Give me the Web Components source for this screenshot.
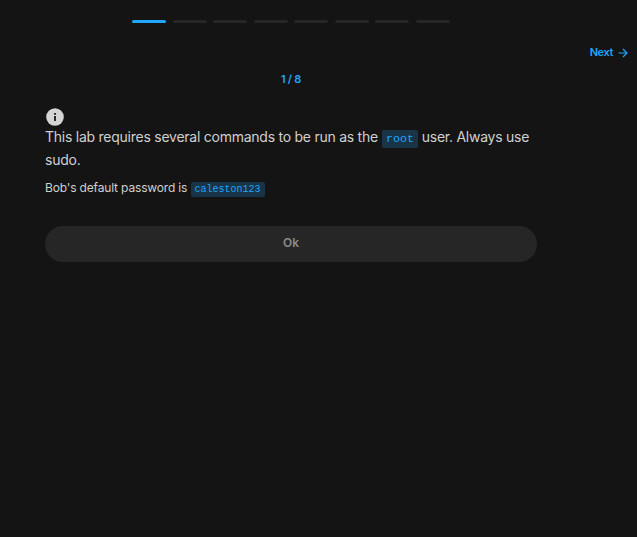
<!DOCTYPE html>
<html lang="en">
<head>
<meta charset="utf-8">
<title>Lab</title>
<style>
body{margin:0;background:#141414;color:#d0d0d0;font-family:Inter,"Liberation Sans",sans-serif}
</style>
</head>
<body>
<lab-quiz></lab-quiz>
<script>
const define=(name,html,setup)=>customElements.define(name,class extends HTMLElement{
  constructor(){super();this.attachShadow({mode:"open"}).innerHTML=html;}
  connectedCallback(){if(setup)setup(this,this.shadowRoot);}
});
define("step-progress",`<style>
:host{display:flex;justify-content:space-between;width:318px;height:3px}
i{width:34px;border-radius:2px;background:#262626}
i.on{background:#1ea7fd}
</style>`,(el,root)=>{
  for(let n=1;n<=+el.getAttribute("total");n++){
    const i=document.createElement("i");
    if(n<=+el.getAttribute("current"))i.className="on";
    root.append(i);
  }
});
define("next-link",`<style>
:host{display:flex;align-items:center;gap:5px;color:#1ea7fd;font-weight:600;font-size:11px;letter-spacing:-.4px;line-height:16px}
svg{display:block;margin-top:1px}
</style><slot></slot><svg width="10" height="10" viewBox="0 0 10 10" fill="none" stroke="currentColor" stroke-width="1.15"><path d="M.5 5H9M5 1 9 5 5 9"/></svg>`);
define("info-icon",`<style>:host{display:block;width:18px;height:18px}svg{display:block}</style>
<svg width="18" height="18" viewBox="0 0 18 18"><circle cx="9" cy="9" r="8.8" fill="#d4d4d4"/><path d="M8 5h2v1.7H8zM8 8h2v5H8z" fill="#302626"/></svg>`);
define("inline-code",`<style>
:host{display:inline-block;box-sizing:border-box;padding:0 4px;height:var(--h,18px);line-height:var(--h,18px);font-size:var(--fs,11.67px);letter-spacing:0;border-radius:2px;background:#183446;color:#1ea7fd;font-family:"Liberation Mono",monospace}
</style><slot></slot>`);
define("pill-button",`<style>
:host{display:block}
button{display:block;width:100%;height:36px;border:0;border-radius:18px;background:#262626;color:#8a8a8a;font:600 12px/34px Inter,sans-serif;padding:0 0 2px}
</style><button><slot></slot></button>`);
define("lab-quiz",`<style>
:host{display:flex;flex-direction:column;min-height:537px;box-sizing:border-box;padding-top:20px}
step-progress{margin-left:132px}
next-link{align-self:flex-end;margin:21px 9px 0 0}
main{width:492px;margin-left:45px}
.count{margin-top:11px;text-align:center;color:#1ea7fd;font-size:11px;letter-spacing:-.3px;font-weight:600;line-height:16px}
info-icon{margin:21px 0 0 1px}
p{margin:0}
.lead{font-size:14px;line-height:23px;margin-top:-1px;letter-spacing:-.25px}
.lead inline-code{margin-left:.5px}
.note{font-size:12px;line-height:20px;margin-top:7px;letter-spacing:-.16px;--fs:10px;--h:15px}
pill-button{margin-top:28px}
</style>
<step-progress total="8" current="1"></step-progress>
<next-link>Next</next-link>
<main>
<div class="count">1 / 8</div>
<info-icon></info-icon>
<p class="lead">This lab requires several commands to be run as the <inline-code>root</inline-code> user. Always use sudo.</p>
<p class="note">Bob's default password is <inline-code>caleston123</inline-code></p>
<pill-button>Ok</pill-button>
</main>`);
</script>
</body>
</html>
